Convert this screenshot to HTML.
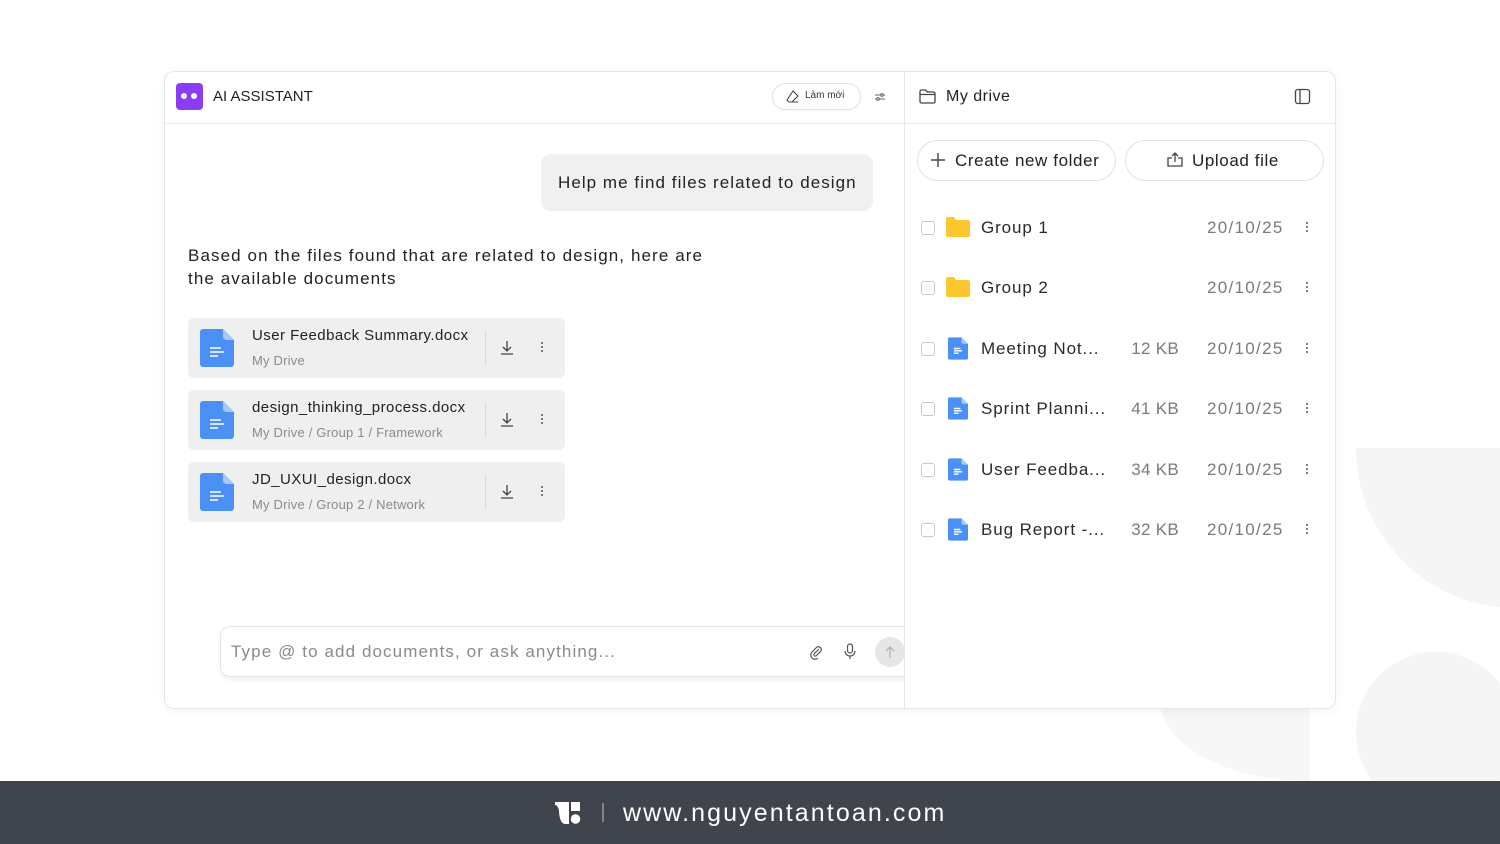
<!DOCTYPE html>
<html><head><meta charset="utf-8"><style>
*{box-sizing:border-box;margin:0;padding:0}
body{width:1500px;height:844px;position:relative;overflow:hidden;background:#fff;font-family:"Liberation Sans",sans-serif;color:#222}
.a{position:absolute}
.card{position:absolute;left:164px;top:71px;width:1172px;height:638px;background:#fff;border:1px solid #e6e6e8;border-radius:10px;box-shadow:0 2px 10px rgba(0,0,0,.05)}
.doc{position:absolute;left:188px;width:377px;height:60px;background:#efefef;border-radius:6px}
.doc .t{position:absolute;left:64px;top:9px;font-size:15px;color:#222;letter-spacing:.45px}
.doc .s{position:absolute;left:64px;top:35px;font-size:13px;color:#8a8a8a;letter-spacing:.2px}
.doc .sep{position:absolute;left:297px;top:14px;width:1px;height:32px;background:#d8d8d8}
.row{position:absolute;left:920px;width:400px;height:30px}
.cb{position:absolute;left:1px;top:8px;width:14px;height:14px;border:1px solid #c8c8c8;border-radius:3px}
.nm{position:absolute;left:61px;top:5px;font-size:17px;color:#2a2a2a;letter-spacing:.9px}
.sz{position:absolute;right:141px;top:5px;font-size:17px;color:#7a7a7a;letter-spacing:.3px}
.dt{position:absolute;left:287px;top:5px;font-size:17px;color:#7a7a7a;letter-spacing:1.3px}
.dots{position:absolute;left:386px;top:9px;width:3px}
.dots i{display:block;width:2px;height:2px;background:#555;margin-bottom:2px;border-radius:1px}
</style></head><body>
<div class="a" style="left:1356px;top:448px;width:300px;height:160px;background:#f5f5f6;border-bottom-left-radius:160px 160px"></div>
<div class="a" style="left:1356px;top:652px;width:160px;height:160px;border-radius:50%;background:#f5f5f6"></div>
<div class="a" style="left:1160px;top:700px;width:150px;height:81px;background:#f7f7f8;border-bottom-left-radius:150px 81px"></div>

<div class="card"></div>
<div class="a" style="left:164px;top:123px;width:1172px;height:1px;background:#e8e8ea"></div>

<div class="a" style="left:176px;top:83px;width:27px;height:27px;background:#8b3cf5;border-radius:4px"></div>
<div class="a" style="left:181px;top:93px;width:6px;height:6px;border-radius:50%;background:#fff"></div>
<div class="a" style="left:191px;top:93px;width:6px;height:6px;border-radius:50%;background:#fff"></div>
<div class="a" style="left:213px;top:88px;font-size:15px;color:#222">AI ASSISTANT</div>
<div class="a" style="left:772px;top:83px;width:89px;height:27px;border:1px solid #e2e2e2;border-radius:14px;box-shadow:0 1px 2px rgba(0,0,0,.05)"></div>
<svg class="a" style="left:785px;top:89px" width="15" height="15" viewBox="0 0 15 15" fill="none" stroke="#444" stroke-width="1.1"><path d="M8 2l5 5-6 6H4L2 11z M5 13h8"/></svg>
<div class="a" style="left:805px;top:90px;font-size:10px;color:#333">Làm mới</div>
<svg class="a" style="left:873px;top:90px" width="14" height="14" viewBox="0 0 14 14" fill="none" stroke="#666" stroke-width="1.1"><path d="M2 5h10M2 9h10"/><circle cx="9" cy="5" r="1.3" fill="#fff"/><circle cx="5" cy="9" r="1.3" fill="#fff"/></svg>

<div class="a" style="left:541px;top:154px;width:332px;height:57px;background:#f0f0f0;border-radius:10px"></div>
<div class="a" style="left:558px;top:173px;font-size:17px;color:#222;letter-spacing:1.05px">Help me find files related to design</div>
<div class="a" style="left:188px;top:244px;font-size:17px;line-height:23px;color:#222;letter-spacing:1.1px">Based on the files found that are related to design, here are<br>the available documents</div>

<div class="doc" style="top:318px"><svg class="a" style="left:12px;top:11px" width="34" height="38" viewBox="0 0 34 38"><path d="M3 0h20l11 11v24a3 3 0 0 1-3 3H3a3 3 0 0 1-3-3V3a3 3 0 0 1 3-3z" fill="#4a90f5"/><path d="M23 0l11 11H26a3 3 0 0 1-3-3z" fill="#a9c9fb"/><path d="M10 19h11M10 23h14M10 27h8" stroke="#fff" stroke-width="1.6"/></svg><div class="t">User Feedback Summary.docx</div><div class="s">My Drive</div><div class="sep"></div><svg class="a" style="left:312px;top:22px" width="14" height="16" viewBox="0 0 14 16" fill="none" stroke="#444" stroke-width="1.3"><path d="M7 1v10M3 7l4 4 4-4M1 14h12"/></svg><div class="dots" style="left:353px;top:24px"><i></i><i></i><i></i></div></div>
<div class="doc" style="top:390px"><svg class="a" style="left:12px;top:11px" width="34" height="38" viewBox="0 0 34 38"><path d="M3 0h20l11 11v24a3 3 0 0 1-3 3H3a3 3 0 0 1-3-3V3a3 3 0 0 1 3-3z" fill="#4a90f5"/><path d="M23 0l11 11H26a3 3 0 0 1-3-3z" fill="#a9c9fb"/><path d="M10 19h11M10 23h14M10 27h8" stroke="#fff" stroke-width="1.6"/></svg><div class="t">design_thinking_process.docx</div><div class="s">My Drive / Group 1 / Framework</div><div class="sep"></div><svg class="a" style="left:312px;top:22px" width="14" height="16" viewBox="0 0 14 16" fill="none" stroke="#444" stroke-width="1.3"><path d="M7 1v10M3 7l4 4 4-4M1 14h12"/></svg><div class="dots" style="left:353px;top:24px"><i></i><i></i><i></i></div></div>
<div class="doc" style="top:462px"><svg class="a" style="left:12px;top:11px" width="34" height="38" viewBox="0 0 34 38"><path d="M3 0h20l11 11v24a3 3 0 0 1-3 3H3a3 3 0 0 1-3-3V3a3 3 0 0 1 3-3z" fill="#4a90f5"/><path d="M23 0l11 11H26a3 3 0 0 1-3-3z" fill="#a9c9fb"/><path d="M10 19h11M10 23h14M10 27h8" stroke="#fff" stroke-width="1.6"/></svg><div class="t">JD_UXUI_design.docx</div><div class="s">My Drive / Group 2 / Network</div><div class="sep"></div><svg class="a" style="left:312px;top:22px" width="14" height="16" viewBox="0 0 14 16" fill="none" stroke="#444" stroke-width="1.3"><path d="M7 1v10M3 7l4 4 4-4M1 14h12"/></svg><div class="dots" style="left:353px;top:24px"><i></i><i></i><i></i></div></div>

<!-- input clipped at divider -->
<div class="a" style="left:210px;top:615px;width:694px;height:75px;overflow:hidden">
  <div class="a" style="left:10px;top:11px;width:720px;height:51px;border:1px solid #e4e4e4;border-radius:10px;background:#fff;box-shadow:0 3px 6px rgba(0,0,0,.06)"></div>
  <div class="a" style="left:21px;top:27px;font-size:17px;color:#8a8a8a;letter-spacing:1.1px;white-space:nowrap">Type @ to add documents, or ask anything...</div>
  <svg class="a" style="left:598px;top:29px" width="16" height="16" viewBox="0 0 16 16" fill="none" stroke="#555" stroke-width="1.2"><path d="M11 5l-5 5a1.5 1.5 0 0 0 2 2l5-5a3 3 0 0 0-4-4L4 8a4 4 0 0 0 6 6"/></svg>
  <svg class="a" style="left:633px;top:28px" width="14" height="17" viewBox="0 0 14 17" fill="none" stroke="#555" stroke-width="1.2"><rect x="4.5" y="1" width="5" height="9" rx="2.5"/><path d="M2 8a5 5 0 0 0 10 0M7 13v3"/></svg>
  <div class="a" style="left:665px;top:22px;width:30px;height:30px;border-radius:50%;background:#e6e6e6"></div>
  <svg class="a" style="left:674px;top:30px" width="12" height="14" viewBox="0 0 12 14" fill="none" stroke="#aaa" stroke-width="1.1"><path d="M6 13V2M2 6l4-4 4 4"/></svg>
</div>
<div class="a" style="left:904px;top:71px;width:1px;height:638px;background:#e6e6e8"></div>

<svg class="a" style="left:918px;top:88px" width="19" height="17" viewBox="0 0 19 17" fill="none" stroke="#444" stroke-width="1.3"><path d="M2 3.5a1.5 1.5 0 0 1 1.5-1.5h4l2 2h6a1.5 1.5 0 0 1 1.5 1.5v8a1.5 1.5 0 0 1-1.5 1.5h-12A1.5 1.5 0 0 1 2 13.5z M2 6.5h15"/></svg>
<div class="a" style="left:946px;top:88px;font-size:16px;color:#222;letter-spacing:.5px">My drive</div>
<svg class="a" style="left:1294px;top:88px" width="17" height="17" viewBox="0 0 17 17" fill="none" stroke="#444" stroke-width="1.3"><rect x="1.5" y="1.5" width="14" height="14" rx="2.5"/><path d="M6 1.5v14"/></svg>

<div class="a" style="left:917px;top:140px;width:199px;height:41px;border:1px solid #e2e2e2;border-radius:21px"></div>
<svg class="a" style="left:930px;top:152px" width="16" height="16" viewBox="0 0 16 16" stroke="#444" stroke-width="1.4"><path d="M8 1v14M1 8h14"/></svg>
<div class="a" style="left:955px;top:151px;font-size:17px;color:#222;letter-spacing:.6px">Create new folder</div>
<div class="a" style="left:1125px;top:140px;width:199px;height:41px;border:1px solid #e2e2e2;border-radius:21px"></div>
<svg class="a" style="left:1166px;top:151px" width="18" height="17" viewBox="0 0 18 17" fill="none" stroke="#444" stroke-width="1.3"><path d="M6 7H2v8h14V7h-4M9 11V2M6 5l3-3 3 3"/></svg>
<div class="a" style="left:1192px;top:151px;font-size:17px;color:#222;letter-spacing:.6px">Upload file</div>

<div class="row" style="top:213px"><div class="cb"></div><svg class="a" style="left:26px;top:4px" width="24" height="20" viewBox="0 0 24 20"><path d="M0 2a2 2 0 0 1 2-2h6l2 3h12a2 2 0 0 1 2 2v13a2 2 0 0 1-2 2H2a2 2 0 0 1-2-2z" fill="#fdc82f"/></svg><div class="nm">Group 1</div><div class="dt">20/10/25</div><div class="dots"><i></i><i></i><i></i></div></div>
<div class="row" style="top:273px"><div class="cb"></div><svg class="a" style="left:26px;top:4px" width="24" height="20" viewBox="0 0 24 20"><path d="M0 2a2 2 0 0 1 2-2h6l2 3h12a2 2 0 0 1 2 2v13a2 2 0 0 1-2 2H2a2 2 0 0 1-2-2z" fill="#fdc82f"/></svg><div class="nm">Group 2</div><div class="dt">20/10/25</div><div class="dots"><i></i><i></i><i></i></div></div>
<div class="row" style="top:334px"><div class="cb"></div><svg class="a" style="left:28px;top:3px" width="20" height="23" viewBox="0 0 34 38"><path d="M3 0h20l11 11v24a3 3 0 0 1-3 3H3a3 3 0 0 1-3-3V3a3 3 0 0 1 3-3z" fill="#4a90f5"/><path d="M23 0l11 11H26a3 3 0 0 1-3-3z" fill="#a9c9fb"/><path d="M10 19h11M10 23h14M10 27h8" stroke="#fff" stroke-width="2.4"/></svg><div class="nm">Meeting Not...</div><div class="sz">12 KB</div><div class="dt">20/10/25</div><div class="dots"><i></i><i></i><i></i></div></div>
<div class="row" style="top:394px"><div class="cb"></div><svg class="a" style="left:28px;top:3px" width="20" height="23" viewBox="0 0 34 38"><path d="M3 0h20l11 11v24a3 3 0 0 1-3 3H3a3 3 0 0 1-3-3V3a3 3 0 0 1 3-3z" fill="#4a90f5"/><path d="M23 0l11 11H26a3 3 0 0 1-3-3z" fill="#a9c9fb"/><path d="M10 19h11M10 23h14M10 27h8" stroke="#fff" stroke-width="2.4"/></svg><div class="nm">Sprint Planni...</div><div class="sz">41 KB</div><div class="dt">20/10/25</div><div class="dots"><i></i><i></i><i></i></div></div>
<div class="row" style="top:455px"><div class="cb"></div><svg class="a" style="left:28px;top:3px" width="20" height="23" viewBox="0 0 34 38"><path d="M3 0h20l11 11v24a3 3 0 0 1-3 3H3a3 3 0 0 1-3-3V3a3 3 0 0 1 3-3z" fill="#4a90f5"/><path d="M23 0l11 11H26a3 3 0 0 1-3-3z" fill="#a9c9fb"/><path d="M10 19h11M10 23h14M10 27h8" stroke="#fff" stroke-width="2.4"/></svg><div class="nm">User Feedba...</div><div class="sz">34 KB</div><div class="dt">20/10/25</div><div class="dots"><i></i><i></i><i></i></div></div>
<div class="row" style="top:515px"><div class="cb"></div><svg class="a" style="left:28px;top:3px" width="20" height="23" viewBox="0 0 34 38"><path d="M3 0h20l11 11v24a3 3 0 0 1-3 3H3a3 3 0 0 1-3-3V3a3 3 0 0 1 3-3z" fill="#4a90f5"/><path d="M23 0l11 11H26a3 3 0 0 1-3-3z" fill="#a9c9fb"/><path d="M10 19h11M10 23h14M10 27h8" stroke="#fff" stroke-width="2.4"/></svg><div class="nm">Bug Report -...</div><div class="sz">32 KB</div><div class="dt">20/10/25</div><div class="dots"><i></i><i></i><i></i></div></div>

<div class="a" style="left:0;top:781px;width:1500px;height:63px;background:#40444c"></div>
<svg class="a" style="left:555px;top:802px" width="27" height="22" viewBox="0 0 27 22" fill="#fff"><path d="M0 0h14v22h-4C6 22 4 15 4 8 3 5 2 3 0 3z"/><rect x="16" y="0" width="9" height="9"/><circle cx="20.5" cy="17" r="4.8"/></svg>
<div class="a" style="left:602px;top:803px;width:2px;height:19px;background:#80838a"></div>
<div class="a" style="left:623px;top:799px;font-size:25px;color:#fff;letter-spacing:2.1px">www.nguyentantoan.com</div>
</body></html>
